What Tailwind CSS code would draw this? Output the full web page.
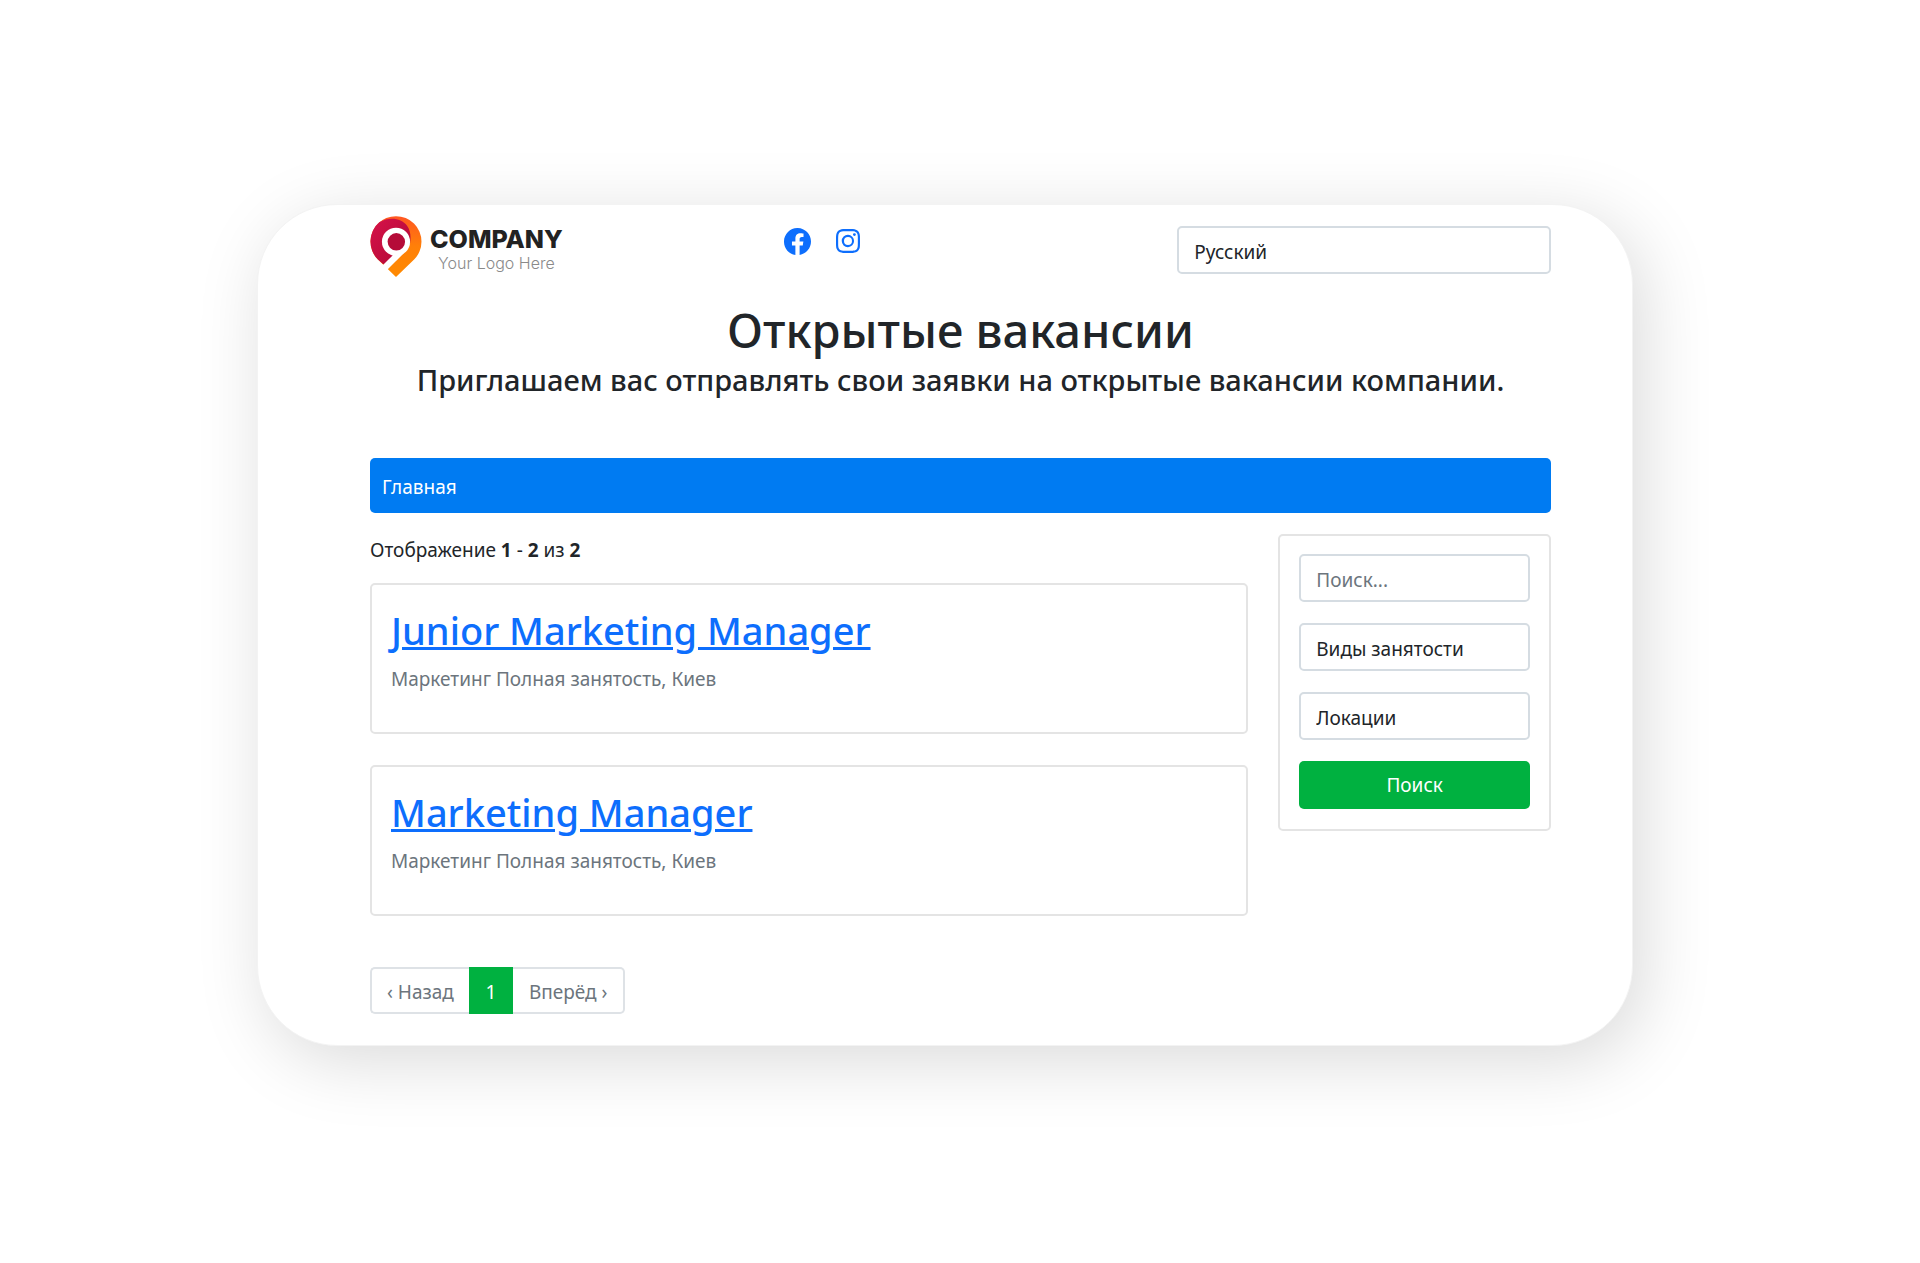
<!DOCTYPE html>
<html lang="ru">
<head>
<meta charset="utf-8">
<meta name="viewport" content="width=device-width, initial-scale=1">
<title>Открытые вакансии</title>
<script src="https://cdn.jsdelivr.net/npm/@tailwindcss/browser@4"></script>
</head>
<body class="bg-white pt-[204px] pr-[287px] pb-[216px] pl-[257px] font-['Noto_Sans','Open_Sans',sans-serif] text-[19px] leading-7 text-[#212529]">
<div class="rounded-[80px] border border-[#f3f3f3] bg-white pt-[11px] pr-[81px] pb-[31px] pl-[112px] shadow-[10px_15px_70px_rgba(0,0,0,0.15)]">

  <header class="grid grid-cols-3 gap-x-[30px]">
    <a href="#" class="flex items-start gap-2" aria-label="Company">
      <svg class="h-[61px] w-[52px] shrink-0" viewBox="393 79 152 182" aria-hidden="true">
        <defs>
          <linearGradient id="orange" x1="0" y1="0" x2="0" y2="1"><stop offset="0" stop-color="#ff5722"/><stop offset=".5" stop-color="#ff8008"/><stop offset="1" stop-color="#ff8a00"/></linearGradient>
          <linearGradient id="crimson" x1="0" y1="0" x2="1" y2="1"><stop offset="0" stop-color="#d6124a"/><stop offset="1" stop-color="#b00a35"/></linearGradient>
        </defs>
        <path fill="url(#orange)" d="M469 261 415 209A76 76 0 1 1 523 209Z"/>
        <path fill="url(#crimson)" d="M432 224 415 209A76 76 0 0 1 420 97C448 81 485 84 502 108 512 122 514 138 511 160L470 198Z"/>
        <circle cx="469" cy="156" r="42" fill="#fff"/>
        <path stroke="#fff" stroke-width="19" d="M485 184 425 244"/>
        <circle cx="470" cy="156" r="26" fill="#b50b38"/>
      </svg>
      <span class="flex flex-col items-center pt-[9px] font-[Inter,sans-serif]">
        <span class="text-[25px] leading-7 font-extrabold text-[#222]">COMPANY</span>
        <span class="text-base leading-5 font-light text-[#8a8a8a]">Your Logo Here</span>
      </span>
    </a>
    <nav class="flex items-start gap-[25px] pt-3 pl-[10px] text-[#0d6efd]" aria-label="Социальные сети">
      <a href="#" aria-label="Facebook"><svg class="size-[27px]" viewBox="0 0 16 16" fill="currentColor"><path d="M16 8.049c0-4.446-3.582-8.05-8-8.05C3.58 0-.002 3.603-.002 8.05c0 4.017 2.926 7.347 6.75 7.951v-5.625h-2.03V8.05H6.75V6.275c0-2.017 1.195-3.131 3.022-3.131.876 0 1.791.157 1.791.157v1.98h-1.009c-.993 0-1.303.621-1.303 1.258v1.51h2.218l-.354 2.326H9.25V16c3.824-.604 6.75-3.934 6.75-7.951z"/></svg></a>
      <a href="#" class="py-px" aria-label="Instagram"><svg class="size-6" viewBox="0 0 16 16" fill="currentColor"><path d="M8 0C5.829 0 5.556.01 4.703.048 3.85.088 3.269.222 2.76.42a3.9 3.9 0 0 0-1.417.923A3.9 3.9 0 0 0 .42 2.76C.222 3.268.087 3.85.048 4.7.01 5.555 0 5.827 0 8.001c0 2.172.01 2.444.048 3.297.04.852.174 1.433.372 1.942.205.526.478.972.923 1.417.444.445.89.719 1.416.923.51.198 1.09.333 1.942.372C5.555 15.99 5.827 16 8 16s2.444-.01 3.298-.048c.851-.04 1.434-.174 1.943-.372a3.9 3.9 0 0 0 1.416-.923c.445-.445.718-.891.923-1.417.197-.509.332-1.09.372-1.942C15.99 10.445 16 10.173 16 8s-.01-2.445-.048-3.299c-.04-.851-.175-1.433-.372-1.941a3.9 3.9 0 0 0-.923-1.417A3.9 3.9 0 0 0 13.24.42c-.51-.198-1.092-.333-1.943-.372C10.443.01 10.172 0 7.998 0zm-.717 1.442h.718c2.136 0 2.389.007 3.232.046.78.035 1.204.166 1.486.275.373.145.64.319.92.599s.453.546.598.92c.11.281.24.705.275 1.485.039.843.047 1.096.047 3.231s-.008 2.389-.047 3.232c-.035.78-.166 1.203-.275 1.485a2.5 2.5 0 0 1-.599.919c-.28.28-.546.453-.92.598-.28.11-.704.24-1.485.276-.843.038-1.096.047-3.232.047s-2.39-.009-3.233-.047c-.78-.036-1.203-.166-1.485-.276a2.5 2.5 0 0 1-.92-.598 2.5 2.5 0 0 1-.6-.92c-.109-.281-.24-.705-.275-1.485-.038-.843-.046-1.096-.046-3.233s.008-2.388.046-3.231c.036-.78.166-1.204.276-1.486.145-.373.319-.64.599-.92s.546-.453.92-.598c.282-.11.705-.24 1.485-.276.738-.034 1.024-.044 2.515-.045zm4.988 1.328a.96.96 0 1 0 0 1.92.96.96 0 0 0 0-1.92m-4.27 1.122a4.109 4.109 0 1 0 0 8.217 4.109 4.109 0 0 0 0-8.217m0 1.441a2.667 2.667 0 1 1 0 5.334 2.667 2.667 0 0 1 0-5.334"/></svg></a>
    </nav>
    <div class="pt-[10px]">
      <select aria-label="Язык" class="block h-12 w-full appearance-none rounded-[5px] border-2 border-[#d5dce2] bg-white px-[15px] pt-[3px]"><option>Русский</option></select>
    </div>
  </header>

  <div class="mt-[25px] text-center font-medium">
    <h1 class="text-[47px] leading-[56px]">Открытые вакансии</h1>
    <p class="mt-1 text-[29px] leading-9">Приглашаем вас отправлять свои заявки на открытые вакансии компании.</p>
  </div>

  <nav class="mt-[60px] flex h-[55px] items-center rounded-[5px] bg-[#007bf2] px-3 pt-[2px] text-white" aria-label="Меню"><a href="#">Главная</a></nav>

  <div class="mt-[21px] grid grid-cols-4 items-start gap-x-[30px]">
    <main class="col-span-3 pt-[2px]">
      <p>Отображение <b>1</b> - <b>2</b> из <b>2</b></p>
      <div class="mt-[19px] flex flex-col gap-[31px]">
        <article class="rounded-[5px] border-2 border-[#e4e4e4] px-[19px] pt-[22px] pb-[39px]">
          <h2 class="text-[38px] leading-[46px] font-medium"><a href="#" class="text-[#0d6efd] underline">Junior Marketing Manager</a></h2>
          <p class="mt-3 text-[#6c757d]">Маркетинг Полная занятость, Киев</p>
        </article>
        <article class="rounded-[5px] border-2 border-[#e4e4e4] px-[19px] pt-[22px] pb-[39px]">
          <h2 class="text-[38px] leading-[46px] font-medium"><a href="#" class="text-[#0d6efd] underline">Marketing Manager</a></h2>
          <p class="mt-3 text-[#6c757d]">Маркетинг Полная занятость, Киев</p>
        </article>
      </div>
      <nav class="mt-[51px] flex h-[47px] text-[#6c757d]" aria-label="Страницы">
        <a href="#" class="flex items-center rounded-l-[5px] border-2 border-r-0 border-[#dee2e6] px-[15px] pt-[3px]">‹ Назад</a>
        <a href="#" class="flex w-11 items-center justify-center bg-[#00b140] pt-[3px] text-white" aria-current="page">1</a>
        <a href="#" class="flex items-center rounded-r-[5px] border-2 border-l-0 border-[#dee2e6] px-4 pt-[3px]">Вперёд ›</a>
      </nav>
    </main>

    <form class="flex flex-col gap-[21px] rounded-[5px] border-2 border-[#e4e4e4] px-[19px] pt-[18px] pb-5">
      <input type="search" aria-label="Поиск" placeholder="Поиск..." class="h-12 w-full appearance-none rounded-[5px] border-2 border-[#d5dce2] px-[15px] pt-[3px] placeholder:text-[#6c757d]">
      <select aria-label="Виды занятости" class="h-12 w-full appearance-none rounded-[5px] border-2 border-[#d5dce2] bg-white px-[15px] pt-[3px]"><option>Виды занятости</option></select>
      <select aria-label="Локации" class="h-12 w-full appearance-none rounded-[5px] border-2 border-[#d5dce2] bg-white px-[15px] pt-[3px]"><option>Локации</option></select>
      <button type="button" class="h-12 rounded-[5px] bg-[#00b140] text-white">Поиск</button>
    </form>
  </div>
</div>
</body>
</html>
